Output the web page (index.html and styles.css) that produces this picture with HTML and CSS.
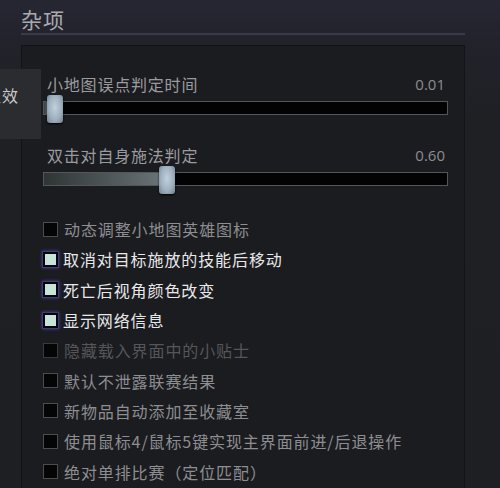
FILE: index.html
```html
<html>
<head>
  <meta charset="UTF-8">
  <title>杂项</title>
  <link rel="stylesheet" href="styles.css">
</head>
<body>
<div class="page">
  <h2 class="section-title">杂项</h2>
  <div class="panel">
    <div class="slider-row">
      <div class="slider-head"><span>小地图误点判定时间</span><span class="slider-value">0.01</span></div>
      <div class="track">
        <div class="track-fill" style="width: 3px"></div>
        <div class="thumb" style="left: 3px"></div>
      </div>
    </div>
    <div class="slider-row">
      <div class="slider-head"><span>双击对自身施法判定</span><span class="slider-value">0.60</span></div>
      <div class="track">
        <div class="track-fill" style="width: 118px"></div>
        <div class="thumb" style="left: 115px"></div>
      </div>
    </div>
    <ul class="options">
      <li class="option"><span class="box"></span>动态调整小地图英雄图标</li>
      <li class="option checked"><span class="box"></span>取消对目标施放的技能后移动</li>
      <li class="option checked"><span class="box"></span>死亡后视角颜色改变</li>
      <li class="option checked"><span class="box"></span>显示网络信息</li>
      <li class="option disabled"><span class="box"></span>隐藏载入界面中的小贴士</li>
      <li class="option"><span class="box"></span>默认不泄露联赛结果</li>
      <li class="option"><span class="box"></span>新物品自动添加至收藏室</li>
      <li class="option"><span class="box"></span>使用鼠标4/鼠标5键实现主界面前进/后退操作</li>
      <li class="option"><span class="box"></span>绝对单排比赛（定位匹配）</li>
    </ul>
  </div>
</div>
<!-- tooltip left over from the previous column -->
<div class="tooltip">生效</div>
</body>
</html>
```

FILE: styles.css
```css
html, body {
  margin: 0;
  width: 500px;
  height: 488px;
  overflow: hidden;
}

body {
  position: relative;
  font-family: "Noto Sans CJK SC", "Noto Sans", sans-serif;
  background: linear-gradient(180deg, #272734 0px, #22222b 45px, #1f2024 120px, #1e1f22 488px);
}

.page {
  padding: 6px 35px 0 21px;
}

.section-title {
  margin: 0;
  font-size: 21px;
  font-weight: normal;
  line-height: 26px;
  color: #a9a9ae;
  letter-spacing: 1px;
  padding-bottom: 1px;
  border-bottom: 2px solid #3a3b47;
}

.panel {
  margin-top: 10px;
  height: 460px;
  box-sizing: border-box;
  border: 1px solid #121214;
  border-right-color: #141416;
  background: #1b1c1f;
  padding: 28px 16px 0 21px;
}

.slider-row {
  margin-bottom: 30px;
}

.slider-head {
  display: flex;
  justify-content: space-between;
  padding: 0 3px 0 4px;
  font-size: 16px;
  line-height: 20px;
  letter-spacing: 0.8px;
  color: #9b9b9f;
}

.slider-value {
  font-family: "Open Sans", "Noto Sans", sans-serif;
  font-size: 15px;
  letter-spacing: 0;
  color: #8c8c90;
}

.track {
  position: relative;
  margin-top: 7px;
  height: 14px;
  box-sizing: border-box;
  border: 1px solid #555659;
  background: #030303;
}

.track-fill {
  height: 100%;
  background: linear-gradient(90deg, #2f3535, #566062 70%, #6a7476);
}

.thumb {
  position: absolute;
  top: -7px;
  width: 16px;
  height: 28px;
  border-radius: 3px;
  background: radial-gradient(ellipse at 50% 45%, #c3d0dd 0%, #9fb0c0 55%, #6f7e8c 100%);
  box-shadow: 0 1px 2px #000;
}

.options {
  list-style: none;
  margin: -2px 0 0 0;
  padding: 0;
}

.option {
  display: flex;
  align-items: center;
  height: 30.3px;
  font-size: 16px;
  letter-spacing: 0.9px;
  color: #8e8e92;
}

.option .box {
  width: 15px;
  height: 15px;
  box-sizing: border-box;
  margin-right: 6px;
  border: 1px solid #4c4c4f;
  background: #050505;
}

.option.checked {
  color: #e8e8ea;
}

.option.checked .box {
  width: 17px;
  height: 17px;
  margin: 0 4px 0 -1px;
  border: 1px solid #3f3b78;
  box-shadow: 0 0 3px #4b4694;
  background: #c6e4da;
  outline: 2px solid #06060a;
  outline-offset: -3px;
}

.option.disabled {
  color: #56565a;
}

.option.disabled .box {
  border-color: #3a3a3c;
}

.tooltip {
  position: absolute;
  left: -40px;
  top: 69px;
  width: 81px;
  height: 70px;
  box-sizing: border-box;
  padding: 14px 0 0 25px;
  background: #2b2c2f;
  color: #c9c9cc;
  font-size: 16px;
  letter-spacing: 1px;
}
```
